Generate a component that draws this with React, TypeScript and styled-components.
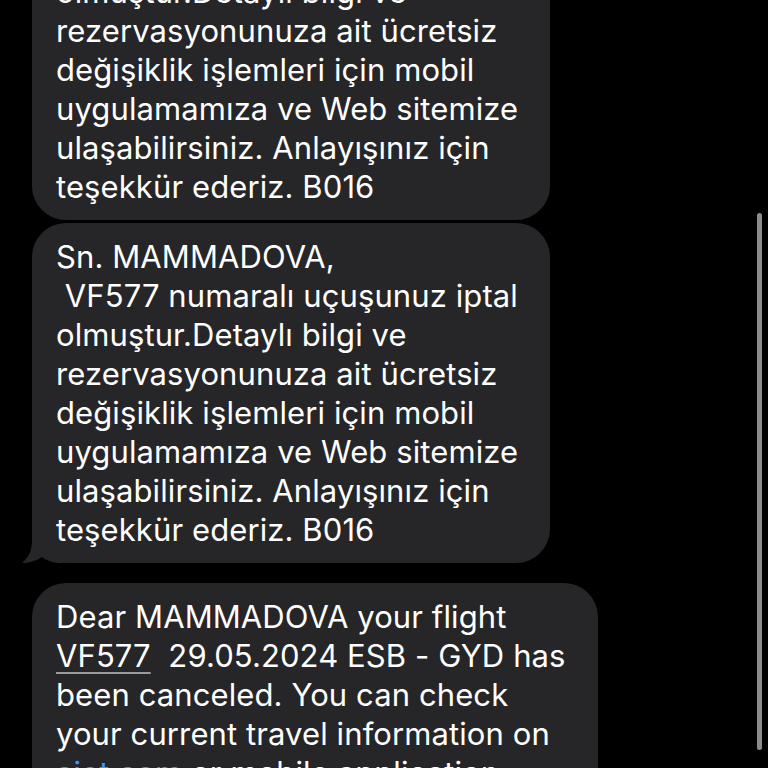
import React from "react";
import styled, { createGlobalStyle } from "styled-components";

const GlobalStyle = createGlobalStyle`
  html, body {
    margin: 0;
    padding: 0;
    background: #000;
  }
  body {
    font-family: Inter, "Noto Sans", "Liberation Sans", sans-serif;
    -webkit-font-smoothing: antialiased;
  }
`;

const BUBBLE = "#262628";

const Screen = styled.div`
  position: relative;
  width: 768px;
  height: 768px;
  overflow: hidden;
  background: #000;
`;

const Thread = styled.div`
  display: flex;
  flex-direction: column;
  align-items: flex-start;
  padding-left: 32px;
  margin-top: -120px;
`;

type BubbleProps = {
  $space: number;
};

const Bubble = styled.div<BubbleProps>`
  position: relative;
  margin-top: ${p => p.$space}px;
  padding: 14px 32px 14px 24px;
  background: ${BUBBLE};
  border-radius: 34px;
  color: #fff;
  font-size: 31px;
  line-height: 39px;
  letter-spacing: 0.1px;
  white-space: pre;
`;

const Line = styled.div`
  position: relative;
`;

const Tail = styled.svg`
  position: absolute;
  left: -10px;
  bottom: 0;
  width: 40px;
  height: 36px;
`;

const Underlined = styled.span`
  text-decoration: underline;
  text-decoration-color: #9a9a9e;
  text-decoration-thickness: 2px;
  text-underline-offset: 5px;
`;

const Link = styled.span`
  color: #3a97ff;
  text-decoration: underline;
  text-decoration-thickness: 2px;
  text-underline-offset: 5px;
`;

const ScrollThumb = styled.div`
  position: absolute;
  right: 6px;
  top: 213px;
  width: 5px;
  height: 537px;
  border-radius: 3px;
  background: #8c8c8e;
`;

const turkishLines = [
  "Sn. MAMMADOVA,",
  " VF577 numaralı uçuşunuz iptal",
  "olmuştur.Detaylı bilgi ve",
  "rezervasyonunuza ait ücretsiz",
  "değişiklik işlemleri için mobil",
  "uygulamamıza ve Web sitemize",
  "ulaşabilirsiniz. Anlayışınız için",
  "teşekkür ederiz. B016"
];

const BubbleTail = () => (
  <Tail viewBox="0 0 40 36">
    <path
      d="M10 0 L10 14 C10 24 6 31 0 36 C7 36 14 34 20 30 C26 35 34 36 40 36 L40 0 Z"
      fill={BUBBLE}
    />
  </Tail>
);

export default function App() {
  return (
    <Screen>
      <GlobalStyle />
      <Thread>
        <Bubble $space={0}>
          {turkishLines.map((l, i) => (
            <Line key={i}>{l}</Line>
          ))}
        </Bubble>
        <Bubble $space={3}>
          <BubbleTail />
          {turkishLines.map((l, i) => (
            <Line key={i}>{l}</Line>
          ))}
        </Bubble>
        <Bubble $space={20}>
          <Line>Dear MAMMADOVA your flight</Line>
          <Line>
            <Underlined>VF577</Underlined>
            {"  29.05.2024 ESB - GYD has"}
          </Line>
          <Line>been canceled. You can check</Line>
          <Line>your current travel information on</Line>
          <Line>
            <Link>ajet.com</Link> or mobile application.
          </Line>
          <Line>Have a nice day.</Line>
        </Bubble>
      </Thread>
      <ScrollThumb />
    </Screen>
  );
}
